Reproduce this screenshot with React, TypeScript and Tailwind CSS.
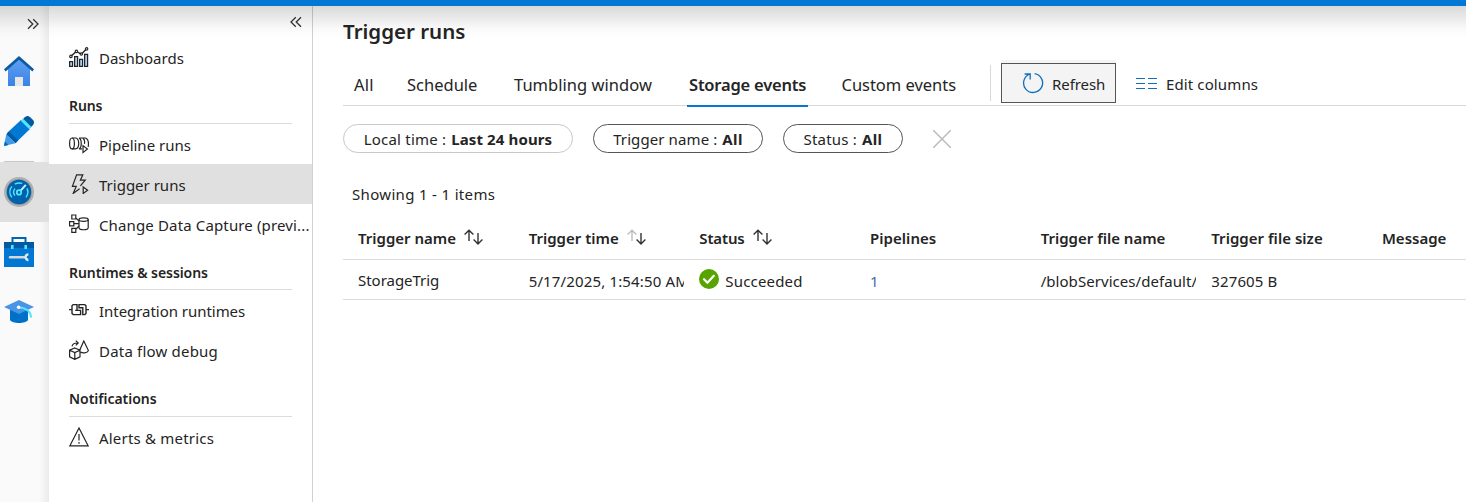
import type { ReactNode } from "react";

function Glyph({ children }: { children: ReactNode }) {
  return (
    <svg className="h-5 w-5 shrink-0" viewBox="0 0 20 20" fill="none" stroke="#242424" strokeWidth="1.2">
      {children}
    </svg>
  );
}

const dashboards = (
  <Glyph>
    <path d="M.6 14.6h3v4.8h-3zM5.6 9.6h3v9.8h-3zM10.6 12.4h3v7h-3zM15.6 7.4h3v12h-3z" fill="#a9cdf2" />
    <path strokeWidth="1.4" d="M2.8 8.6l3.6-3.4M8.4 5l3 1.6M13.3 6.2l3.6-3.6" />
    <circle cx="1.9" cy="9.4" r="1.2" />
    <circle cx="7.4" cy="4.4" r="1.2" />
    <circle cx="12.3" cy="7" r="1.2" />
    <circle cx="17.6" cy="1.9" r="1.2" />
  </Glyph>
);
const pipeline = (
  <Glyph>
    <ellipse cx="3" cy="9.4" rx="2.4" ry="5.4" />
    <path d="M3 4h4.4M3 14.8h4.2M7 4c3.6 1.2 3.6 9.6 0 10.8M10 4h6.6M10 4c3 1.4 3 9.4 0 10.8h3M16.4 4c3.2 1.2 3.4 5 2.8 8.8M14 4.2c1.4 1.2 1.8 4 1.4 5.6" />
    <path fill="#fff" d="M14 11.6l4.4 3.4-4.4 3.6z" />
  </Glyph>
);
const trigger = (
  <Glyph>
    <path d="M10.6 14.8L4.2 19.4l3-7H3.4L7.6.8h6.2l-2.4 5.4h4.8l-4.8 5.6" />
    <path d="M14.2 13l4.4 3.2-4.4 3.2z" />
  </Glyph>
);
const capture = (
  <Glyph>
    <path d="M2.8 1h4v4h-4zM.6 7.6h4.2v4.2H.6zM2.8 14.4h4v4h-4zM4.8 9.7H10M6.8 3.8L10 7.2M6.8 15.4l3.2-3.4" />
    <ellipse cx="14.6" cy="5.6" rx="4.6" ry="1.8" />
    <path d="M10 5.6v8.2c0 2.6 9.2 2.6 9.2 0V5.6" />
  </Glyph>
);
const integration = (
  <Glyph>
    <path strokeWidth="1.4" d="M0 9.6h3M17 9.6h3M8 4.6H4.2L3 5.8v7.6l1.2 1.2h7.4v-4.2H8zM10 4.6h5.8L17 5.8v7.6l-1.2 1.2h-2V7.8H10zM8 10.4H6.2" />
  </Glyph>
);
const dataflow = (
  <Glyph>
    <path d="M5.8 8l5.2 2.2v6.6l-5.2 2.6-5.2-2.6v-6.6zM.6 10.2l5.2 2.4 5.2-2.4M5.8 12.6v6.8M3 6.4c.4-2.4 2.4-3.6 6-3.4M6.8.6L9.2 3 6.8 5.4M10.8 10L14.8 1l4.6 9.6c-1 2.6-6.2 3-7.8 1.4" />
  </Glyph>
);
const alert = (
  <Glyph>
    <path d="M10 1L.9 18.8h18.2zM10 7v6.6M10 15v1.8" />
  </Glyph>
);

function NavItem({ icon, label, track = "", selected }: { icon: ReactNode; label: string; track?: string; selected?: boolean }) {
  return (
    <div className={`flex h-10 shrink-0 items-center gap-[10px] pl-5 ${selected ? "bg-[#e0e0e0]" : ""}`}>
      {icon}
      <span className={`whitespace-nowrap pt-[2px] ${track}`}>{label}</span>
    </div>
  );
}

function NavHeading({ label, box, track = "" }: { label: string; box: string; track?: string }) {
  return (
    <div className={`mx-5 flex shrink-0 items-center border-b border-[#dcdcdc] text-[14px] font-semibold ${box}`}>
      <span className={track}>{label}</span>
    </div>
  );
}

function Sort({ dimUp }: { dimUp?: boolean }) {
  return (
    <svg className="mb-px ml-2 h-4 w-[19px]" viewBox="0 0 19 16" fill="none" strokeWidth="1.4">
      <path stroke={dimUp ? "#bdbdbd" : "#333"} d="M5 12V1.4M.6 5.6L5 1.2l4.4 4.4" />
      <path stroke="#333" d="M14 4v10.8M9.6 10.6L14 15l4.4-4.4" />
    </svg>
  );
}

function Cell({ children }: { children?: ReactNode }) {
  return <div className="flex w-[170.67px] shrink-0 items-center overflow-hidden whitespace-nowrap pl-[15px]">{children}</div>;
}

function Tab({ label, box, selected }: { label: string; box: string; selected?: boolean }) {
  return (
    <div className={`flex shrink-0 items-center whitespace-nowrap pt-[2px] text-[16.5px] ${box} ${selected ? "relative font-semibold" : ""}`}>
      {label}
      {selected && <div className="absolute -bottom-px -left-[2px] h-[2px] w-[121px] bg-[#0078d4]" />}
    </div>
  );
}

function Pill({ name, value, box, nameTrack, valueTrack = "" }: { name: string; value: string; box: string; nameTrack: string; valueTrack?: string }) {
  return (
    <div className={`flex h-[29px] items-center justify-center gap-[5px] whitespace-nowrap rounded-full border ${box}`}>
      <span className={nameTrack}>{name}</span>
      <b className={valueTrack}>{value}</b>
    </div>
  );
}

export default function App() {
  return (
    <div className="flex h-[502px] w-[1466px] flex-col overflow-hidden bg-white font-['Noto_Sans',sans-serif] text-[15px] leading-5 text-[#242424]">
      <header className="relative z-10 h-[6px] shrink-0 bg-[#0078d4]">
        <div className="pointer-events-none absolute inset-x-0 top-full h-8 bg-[linear-gradient(to_bottom,rgba(0,0,0,0.15),rgba(0,0,0,0.085)_35%,rgba(0,0,0,0.025)_70%,transparent)]" />
      </header>
      <div className="flex min-h-0 flex-1">
        <nav className="flex w-[49px] shrink-0 flex-col bg-[linear-gradient(to_right,#fafafa_80%,#ebebeb)]">
          <svg className="ml-[27px] mt-[12px] h-3 w-3" viewBox="0 0 12 12" fill="none" stroke="#333" strokeWidth="1.3">
            <path d="M1 1.2L5.8 6 1 10.8M6.2 1.2L11 6l-4.8 4.8" />
          </svg>
          <svg className="ml-1 mt-[26px] h-[30px] w-[30px]" viewBox="0 0 30 30">
            <defs>
              <linearGradient id="home" x2="0" y2="1">
                <stop stopColor="#5ea0ef" />
                <stop offset="1" stopColor="#3b82e8" />
              </linearGradient>
            </defs>
            <path fill="url(#home)" d="M4 13L15 3l11 10v17H4z" />
            <path fill="#0c59a4" d="M15 0L0 13.2l1.6 2.2L15 3.8l13.4 11.6 1.6-2.2z" />
            <path fill="#e6e6e6" d="M11 21h8v9h-8z" />
          </svg>
          <svg className="ml-1 mt-[30px] h-[30px] w-[30px]" viewBox="0 0 30 30">
            <path fill="#0078d4" d="M3 17L17 4l9 9-14.5 14z" />
            <path fill="#005ba1" d="M17.8 4.2l3-3a4 4 0 015.4 0l2.6 2.6a4 4 0 010 5.4l-3 3z" />
            <path fill="#50e6ff" d="M17 5l2.2-2.2 8 8L25 13z" />
            <path fill="#005ba1" d="M2.2 18.4L5 15.6l9.2 9-2.8 2.6z" />
            <path fill="#3d9be9" d="M2.2 18.4l9.2 8.8L0 30z" />
            <path fill="#0067b8" d="M.9 25.6L4.4 29 0 30z" />
          </svg>
          <div className="ml-1 mt-[15px] h-px w-[30px] bg-[#c8c8c8]" />
          <div className="flex h-[60px] items-center bg-[#e0e0e0] pl-1">
            <svg className="h-[30px] w-[30px]" viewBox="0 0 30 30" fill="none">
              <circle cx="15" cy="15" r="15" fill="#b0b0b0" />
              <circle cx="15" cy="15" r="13" fill="#989898" />
              <circle cx="15" cy="15" r="12.2" fill="#0062ad" />
              <path stroke="#50e6ff" strokeWidth="1.4" d="M7.8 20.4a9 9 0 010-11M11 18.6a5.4 5.4 0 010-7M10.8 7.2a9.4 9.4 0 017.4-.8M23 11.4a9 9 0 01-1 9" />
              <path stroke="#c3f1ff" strokeWidth="2" d="M16.4 13.8l5.4-6" />
              <circle cx="15" cy="15.4" r="2.2" stroke="#50e6ff" strokeWidth="1.8" />
            </svg>
          </div>
          <svg className="ml-1 mt-[15px] h-[30px] w-[30px]" viewBox="0 0 30 30">
            <path fill="none" stroke="#0067b8" strokeWidth="2" d="M8.5 6V1h13v5" />
            <path fill="#0078d4" d="M0 5h30v25H0z" />
            <path fill="#005ba1" d="M0 5h30v6H0z" />
            <path fill="#50e6ff" d="M7 8h2.6v4H7zM20.4 8H23v4h-2.6z" />
            <path d="M6 20.2h14" stroke="#d8d8d8" strokeWidth="2.4" strokeLinecap="round" />
            <path d="M24.4 17.4a2.8 2.8 0 100 5.6" fill="none" stroke="#e8e8e8" strokeWidth="2.4" />
          </svg>
          <svg className="ml-1 mt-[33px] h-6 w-[30px]" viewBox="0 0 30 24">
            <path fill="#0070c8" d="M6 10h18v10c-2 4-16 4-18 0z" />
            <path fill="#4a94e6" d="M15 0l15 7-15 7L0 7z" />
            <path fill="none" stroke="#50e6ff" strokeWidth="2" d="M15 7.4c7 .4 11.6 3.4 12.2 10.2" />
            <circle cx="14.6" cy="7.2" r="1.8" fill="#fff" />
          </svg>
        </nav>
        <aside className="flex w-[264px] shrink-0 flex-col border-r border-[#d0d0d0]">
          <div className="flex h-[31px] shrink-0 justify-end pr-[10px] pt-[10px]">
            <svg className="h-3 w-3" viewBox="0 0 12 12" fill="none" stroke="#333" strokeWidth="1.3">
              <path d="M5.8 1.2L1 6l4.8 4.8M11 1.2L6.2 6l4.8 4.8" />
            </svg>
          </div>
          <NavItem icon={dashboards} label="Dashboards" />
          <NavHeading label="Runs" box="h-[47px] pt-3" track="tracking-[-0.1px]" />
          <NavItem icon={pipeline} label="Pipeline runs" />
          <NavItem icon={trigger} label="Trigger runs" selected />
          <NavItem icon={capture} label="Change Data Capture (previ..." track="tracking-[0.14px]" />
          <NavHeading label="Runtimes & sessions" box="h-[46px] pt-[13px]" track="tracking-[-0.06px]" />
          <NavItem icon={integration} label="Integration runtimes" track="tracking-[-0.04px]" />
          <NavItem icon={dataflow} label="Data flow debug" track="tracking-[0.2px]" />
          <NavHeading label="Notifications" box="h-[47px] pt-3" track="tracking-[-0.02px]" />
          <NavItem icon={alert} label="Alerts & metrics" track="tracking-[0.2px]" />
        </aside>
        <main className="min-w-0 flex-1 overflow-hidden pl-[30px]">
          <h1 className="h-10 pt-[11px] text-[20.5px] font-semibold leading-7">Trigger runs</h1>
          <div className="flex h-[60px] border-b border-[#d8d8d8] pt-[14px]">
            <div className="flex h-[46px] gap-8 pl-[11px] pt-[2px]">
              <Tab label="All" box="w-[21px] tracking-[0.2px]" />
              <Tab label="Schedule" box="w-[75px]" />
              <Tab label="Tumbling window" box="w-[143px] tracking-[0.03px]" />
              <Tab label="Storage events" box="w-[120.5px] tracking-[-0.2px]" selected />
              <Tab label="Custom events" box="w-[117.5px] tracking-[-0.03px]" />
            </div>
            <div className="ml-[31px] mt-[5px] h-9 w-px shrink-0 bg-[#d8d8d8]" />
            <div className="ml-[10px] h-[43px] shrink-0 bg-[#f4f4f4] pt-[3px]">
              <div className="flex h-10 w-[115px] items-center gap-[9px] border border-[#555] pl-5">
                <svg className="h-[22px] w-[22px]" viewBox="0 0 22 22" fill="none" stroke="#106ebe" strokeWidth="1.3">
                  <path d="M12.6 1.6A9.5 9.5 0 118 2M2.6 2h5.6v5.4" />
                </svg>
                <span className="-ml-px pt-[2px] tracking-[-0.08px]">Refresh</span>
              </div>
            </div>
            <div className="ml-5 mt-[3px] flex h-10 shrink-0 items-center gap-[9px]">
              <svg className="mt-[2px] h-[14px] w-[21px]" viewBox="0 0 21 14" fill="none" stroke="#106ebe" strokeWidth="1.2">
                <path d="M0 1.5h9M0 6.5h9M0 11.5h9M12 1.5h9M12 6.5h9M12 11.5h9" />
              </svg>
              <span className="whitespace-nowrap pt-[2px] tracking-[0.12px]">Edit columns</span>
            </div>
          </div>
          <div className="mt-[18px] flex items-center">
            <Pill name="Local time :" value="Last 24 hours" box="w-[230px] border-[#c8c8c8]" nameTrack="tracking-[0.2px]" valueTrack="tracking-[0.12px]" />
            <Pill name="Trigger name :" value="All" box="ml-5 w-[170px] border-[#555]" nameTrack="tracking-[0.1px]" valueTrack="tracking-[0.4px]" />
            <Pill name="Status :" value="All" box="ml-5 w-[120px] border-[#555]" nameTrack="tracking-[0.2px]" valueTrack="tracking-[0.4px]" />
            <svg className="ml-[30px] h-[18px] w-[18px]" viewBox="0 0 18 18" stroke="#bbb" strokeWidth="1.5">
              <path d="M0 0l18 18M18 0L0 18" />
            </svg>
          </div>
          <div className="ml-[9px] mt-[31px] tracking-[0.33px]">Showing 1 - 1 items</div>
          <section className="w-[1195px]">
            <div className="mt-[14px] flex h-[42px] border-b border-[#dcdcdc] pb-[2px] font-semibold">
              <Cell><span>Trigger name</span><Sort /></Cell>
              <Cell><span>Trigger time</span><Sort dimUp /></Cell>
              <Cell><span className="tracking-[-0.15px]">Status</span><Sort /></Cell>
              <Cell><span className="tracking-[0.05px]">Pipelines</span></Cell>
              <Cell><span>Trigger file name</span></Cell>
              <Cell><span className="tracking-[0.03px]">Trigger file size</span></Cell>
              <Cell><span>Message</span></Cell>
            </div>
            <div className="flex h-10 border-b border-[#dcdcdc]">
              <Cell><span className="tracking-[-0.03px]">StorageTrig</span></Cell>
              <Cell><span className="pt-[2px] tracking-[0.15px]">5/17/2025, 1:54:50 AM</span></Cell>
              <Cell>
                <svg className="mb-px h-5 w-5" viewBox="0 0 20 20">
                  <circle cx="10" cy="10" r="10" fill="#57a300" />
                  <path d="M5 10.2l3.4 3.6 6.4-7" fill="none" stroke="#fff" strokeWidth="2.2" strokeLinecap="round" strokeLinejoin="round" />
                </svg>
                <span className="ml-[6px] pt-[2px] tracking-[0.18px]">Succeeded</span>
              </Cell>
              <Cell><span className="pt-[2px] text-[#4a68b0]">1</span></Cell>
              <Cell><span className="pt-[2px] tracking-[0.06px]">/blobServices/default/</span></Cell>
              <Cell><span className="pt-[2px] tracking-[0.12px]">327605 B</span></Cell>
              <Cell />
            </div>
          </section>
        </main>
      </div>
    </div>
  );
}
